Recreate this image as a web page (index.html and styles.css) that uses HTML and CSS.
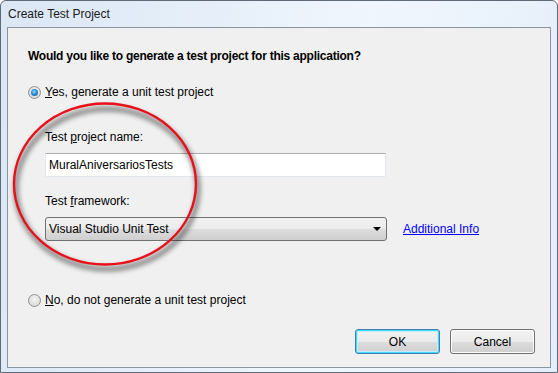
FILE: index.html
```html
<!DOCTYPE html>
<html lang="en">
<head>
    <meta charset="UTF-8">
    <title>Create Test Project</title>
    <link rel="stylesheet" href="styles.css">
</head>
<body>
    <div class="window">
        <div class="titlebar">Create Test Project</div>
        <div class="client">
            <div class="question">Would you like to generate a test project for this application?</div>

            <label class="radio-row first">
                <span class="radio checked"></span>
                <span><u>Y</u>es, generate a unit test project</span>
            </label>

            <div class="options">
                <div class="field-label">Test <u>p</u>roject name:</div>
                <div class="textbox">MuralAniversariosTests</div>

                <div class="field-label second">Test <u>f</u>ramework:</div>
                <div class="combo-row">
                    <div class="combo">
                        <span>Visual Studio Unit Test</span>
                        <span class="arrow"></span>
                    </div>
                    <a class="info-link" href="#">Additional Info</a>
                </div>
            </div>

            <label class="radio-row last">
                <span class="radio"></span>
                <span><u>N</u>o, do not generate a unit test project</span>
            </label>

            <div class="buttons">
                <button class="btn default">OK</button>
                <button class="btn">Cancel</button>
            </div>
        </div>

        <!-- hand drawn highlight over the options -->
        <svg class="highlight" width="558" height="373" viewBox="0 0 558 373">
            <defs>
                <filter id="blur" x="-20%" y="-20%" width="140%" height="140%">
                    <feGaussianBlur stdDeviation="2.5"/>
                </filter>
            </defs>
            <ellipse cx="107" cy="189" rx="91" ry="80" fill="none" stroke="rgba(0,0,0,0.45)" stroke-width="5" filter="url(#blur)"/>
            <ellipse cx="105" cy="184" rx="91" ry="80.5" fill="none" stroke="#e8101a" stroke-width="2.4"/>
        </svg>
    </div>
</body>
</html>
```

FILE: styles.css
```css
body {
    margin: 0;
    font-family: 'Liberation Sans', Arial, sans-serif;
    font-size: 12px;
    color: #000;
    background: #fff;
}

.window {
    position: relative;
    box-sizing: border-box;
    width: 558px;
    height: 373px;
    display: flex;
    flex-direction: column;
    border: 1px solid #5e6a78;
    border-radius: 6px 6px 0 0;
    background: linear-gradient(100deg, #dbe7f5 0%, #e6eff9 35%, #f0f6fd 60%, #e4eef9 100%);
}

.titlebar {
    height: 26px;
    padding-left: 7px;
    line-height: 26px;
    font-size: 12px;
    color: #1b1b1b;
}

.client {
    flex: 1;
    display: flex;
    flex-direction: column;
    margin: 0 6px 4px 6px;
    padding: 20px 15px 13px 20px;
    border: 1px solid #8a949e;
    background: #f0f0f0;
}

.question {
    font-weight: bold;
    line-height: 16px;
    letter-spacing: -0.25px;
}

.radio-row {
    display: flex;
    align-items: center;
    gap: 4px;
    height: 16px;
}

.radio-row.first {
    margin-top: 20px;
}

.radio-row.last {
    margin-top: 51px;
}

.radio {
    box-sizing: border-box;
    width: 13px;
    height: 13px;
    border-radius: 50%;
    border: 1px solid #8f8f8f;
    background: radial-gradient(circle at 50% 40%, #f4f4f4 0%, #dcdcdc 70%, #cfcfcf 100%);
    display: flex;
    align-items: center;
    justify-content: center;
}

.radio.checked::after {
    content: '';
    width: 7px;
    height: 7px;
    border-radius: 50%;
    background: radial-gradient(circle at 45% 40%, #9fd8ff 0%, #2b8fd6 45%, #0d4f91 100%);
}

.options {
    margin-left: 17px;
}

.field-label {
    margin-top: 29px;
    line-height: 16px;
}

.field-label.second {
    margin-top: 16px;
}

.textbox {
    box-sizing: border-box;
    width: 341px;
    height: 24px;
    margin-top: 8px;
    padding-left: 3px;
    line-height: 22px;
    background: #fff;
    border: 1px solid #e3e9ef;
    border-top-color: #abadb3;
}

.combo-row {
    display: flex;
    align-items: center;
    gap: 16px;
    margin-top: 8px;
}

.combo {
    box-sizing: border-box;
    width: 342px;
    height: 24px;
    display: flex;
    align-items: center;
    justify-content: space-between;
    padding: 0 5px 0 3px;
    border: 1px solid #707070;
    border-radius: 3px;
    background: linear-gradient(#f2f2f2 0%, #ebebeb 50%, #dddddd 50%, #cfcfcf 100%);
}

.arrow {
    width: 0;
    height: 0;
    border-left: 4px solid transparent;
    border-right: 4px solid transparent;
    border-top: 4px solid #000;
}

.info-link {
    color: #0000ff;
    text-decoration: underline;
    font-size: 12px;
}

.buttons {
    margin-top: auto;
    display: flex;
    justify-content: flex-end;
    gap: 10px;
}

.btn {
    box-sizing: border-box;
    width: 85px;
    height: 25px;
    font-family: 'Liberation Sans', Arial, sans-serif;
    font-size: 12px;
    color: #000;
    border: 1px solid #707070;
    border-radius: 3px;
    background: linear-gradient(#f2f2f2 0%, #ebebeb 50%, #dddddd 50%, #cfcfcf 100%);
    box-shadow: inset 0 0 0 1px #fcfcfc;
}

.btn.default {
    border-color: #3c7fb1;
    box-shadow: inset 0 0 0 1px #48d8fb, inset 0 0 0 2px #bfeefd;
}

.highlight {
    position: absolute;
    left: -1px;
    top: -1px;
    pointer-events: none;
}
```
